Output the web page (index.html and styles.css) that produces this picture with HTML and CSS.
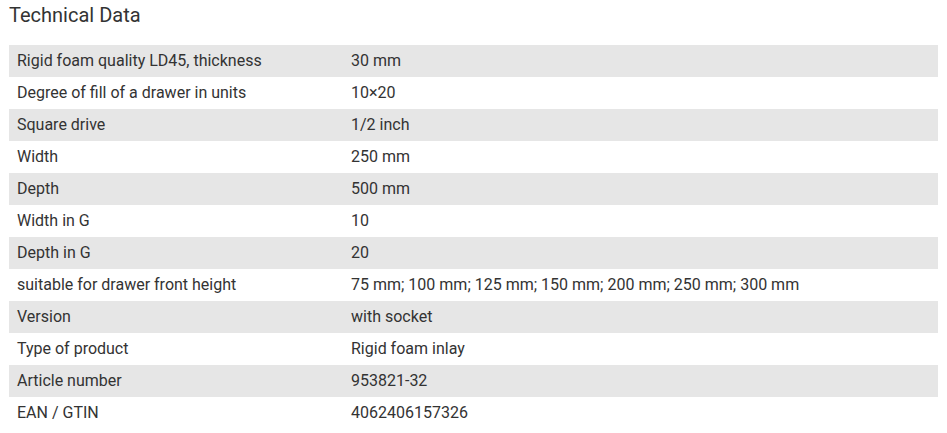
FILE: index.html
```html
<!DOCTYPE html>
<html>
<head>
<meta charset="utf-8">
<link rel="stylesheet" href="styles.css">
</head>
<body>
<h2 class="title">Technical Data</h2>
<table class="tech">
<tbody>
<tr><td>Rigid foam quality LD45, thickness</td><td>30 mm</td></tr>
<tr><td>Degree of fill of a drawer in units</td><td>10×20</td></tr>
<tr><td>Square drive</td><td>1/2 inch</td></tr>
<tr><td>Width</td><td>250 mm</td></tr>
<tr><td>Depth</td><td>500 mm</td></tr>
<tr><td>Width in G</td><td>10</td></tr>
<tr><td>Depth in G</td><td>20</td></tr>
<tr><td>suitable for drawer front height</td><td>75 mm; 100 mm; 125 mm; 150 mm; 200 mm; 250 mm; 300 mm</td></tr>
<tr><td>Version</td><td>with socket</td></tr>
<tr><td>Type of product</td><td>Rigid foam inlay</td></tr>
<tr><td>Article number</td><td>953821-32</td></tr>
<tr><td>EAN / GTIN</td><td>4062406157326</td></tr>
</tbody>
</table>
</body>
</html>
```
FILE: styles.css
```css
body {
  margin: 0;
  padding: 0 9px;
  font-family: Roboto, "Liberation Sans", sans-serif;
  color: #333;
  background: #fff;
}
.title {
  margin: 0;
  padding-top: 3px;
  height: 42px;
  font-size: 20px;
  font-weight: 400;
  line-height: 24px;
  color: #333;
}
.tech {
  width: 929px;
  table-layout: fixed;
  border-collapse: collapse;
  font-size: 16px;
}
.tech td {
  height: 32px;
  padding: 0 8px;
  line-height: 32px;
  vertical-align: middle;
  white-space: nowrap;
}
.tech td:first-child {
  width: 318px;
}
.tech tr:nth-child(odd) {
  background: #e6e6e6;
}
```
